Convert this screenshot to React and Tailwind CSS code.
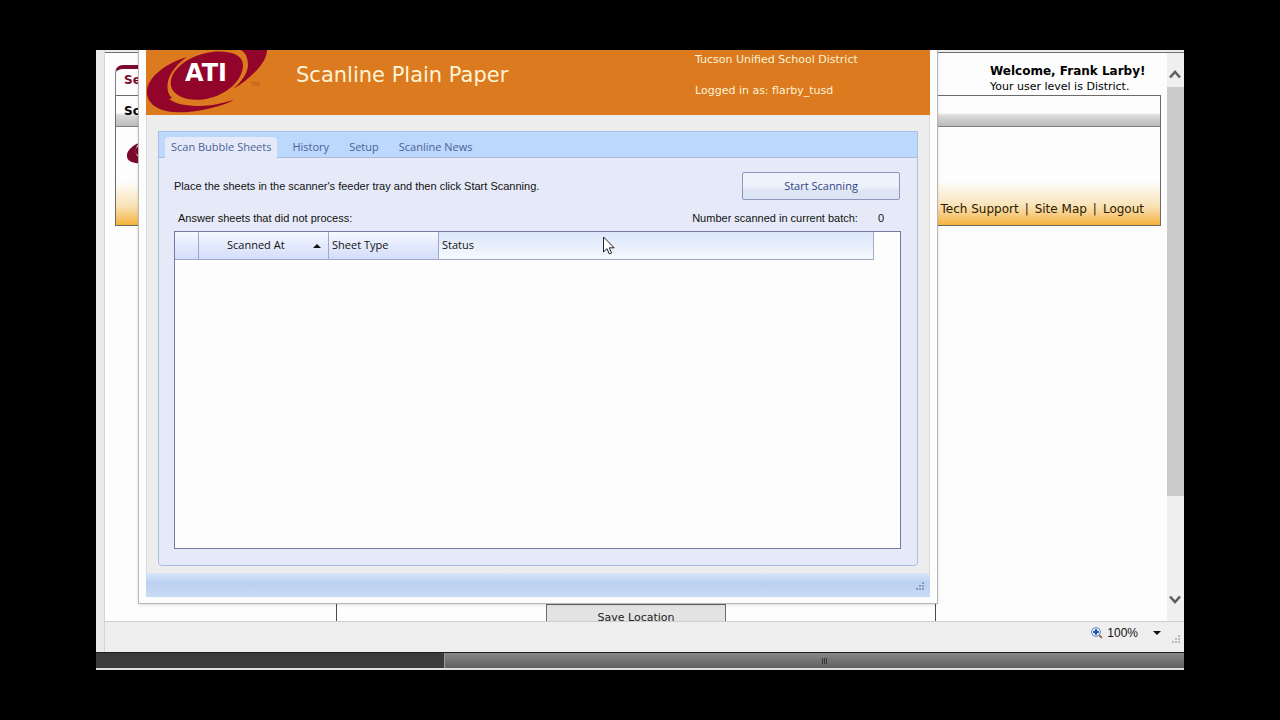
import { useState } from 'react'

const tabs = ['Scan Bubble Sheets', 'History', 'Setup', 'Scanline News']

function AtiLogo() {
  return (
    <svg viewBox="0 0 122 65" className="h-[65px] w-[122px] shrink-0" role="img" aria-label="ATI">
      <g fill="#92042a">
        <path d="M41 7C20 13 0 28 1 43C2 58 20 64 42 62C60 60 76 56 88 50C76 53 65 56 54 56C40 56 30 54 23 49L26 48C19 42 20 28 29 18C32 14 36 10 41 7Z" />
        <path d="M95 0H121C121 6 117 14 110 21C103 28 96 34 87 39C96 31 101 24 102 16C102 8 100 3 95 0Z" />
        <path d="M25 36C22 21 42 5 66 2C84 0 97 5 97 15C97 30 81 45 60 49C43 52 28 47 25 36Z" />
      </g>
      <text x="60" y="31" textAnchor="middle" fill="#fff" fontFamily="DejaVu Sans, sans-serif" fontSize="24" fontWeight="700">ATI</text>
      <text x="105" y="36" fill="#a9561b" fontFamily="Liberation Sans, sans-serif" fontSize="6">TM</text>
    </svg>
  )
}

function Grip({ className }) {
  return (
    <svg viewBox="0 0 10 10" className={`size-[10px] ${className}`} fill="currentColor" aria-hidden="true">
      <path d="M7 1h2v2H7zM4 4h2v2H4zM7 4h2v2H7zM1 7h2v2H1zM4 7h2v2H4zM7 7h2v2H7z" />
    </svg>
  )
}

function Chevron({ up }) {
  return (
    <svg viewBox="0 0 12 9" className="h-[9px] w-3" aria-hidden="true">
      <path d={up ? 'M1 7.5L6 2L11 7.5' : 'M1 1.5L6 7L11 1.5'} fill="none" stroke="#606060" strokeWidth="2.6" />
    </svg>
  )
}

function PortalPage() {
  return (
    <div className="relative min-w-0 flex-1 overflow-hidden bg-[#fdfdfd] pr-[6px] pl-[10px] font-['DejaVu_Sans',sans-serif]">
      <div className="flex h-[42px] items-end justify-between">
        <div className="flex h-[30px] w-24 items-center rounded-tl-lg border border-t-4 border-b-0 border-[#808080] border-t-[#7c0a2c] pb-1 pl-2 text-xs font-bold text-[#7c0a2c]">Se</div>
        <div className="w-[171px] text-black">
          <p className="text-xs leading-4 font-bold whitespace-nowrap">Welcome, Frank Larby!</p>
          <p className="text-[11px] leading-4 whitespace-nowrap">Your user level is District.</p>
        </div>
      </div>
      <div className="border border-[#6b6b6b]">
        <div className="flex h-[31px] items-center border-b border-[#808080] bg-linear-to-b from-[#fdfdfd] from-55% via-[#dadada] via-65% to-[#bcbcbc] pl-2 text-xs font-bold text-black">Sc</div>
        <div className="flex h-[98px] flex-col justify-between bg-linear-to-b from-[#fdfdfd] from-55% via-[#f9e3b8] via-80% to-[#f5b233]">
          <svg viewBox="0 0 28 24" className="mt-4 ml-[11px] h-6 w-7" aria-hidden="true">
            <path d="M12 0C-4 6-5 22 14 20C22 19 25 17 28 14C10 19 4 10 12 0Z" fill="#7c0a2c" />
            <ellipse cx="17" cy="8" rx="9" ry="6" fill="#7c0a2c" />
          </svg>
          <nav className="flex justify-end gap-[6px] pr-4 pb-2 text-xs leading-4 text-[#2a1a05]">
            <a href="#support">Tech Support</a>
            <span>|</span>
            <a href="#map">Site Map</a>
            <span>|</span>
            <a href="#logout">Logout</a>
          </nav>
        </div>
      </div>
      <div className="mt-[370px] mr-[225px] ml-[221px] flex h-10 justify-center border-x border-[#4a4a4a] pt-2">
        <button className="h-7 w-[180px] border border-[#6b6b6b] bg-[#e3e3e3] text-[11px] text-[#222]">Save Location</button>
      </div>
    </div>
  )
}

function Scrollbar() {
  return (
    <div className="flex w-[17px] flex-col bg-[#efefef]">
      <button aria-label="Scroll up" className="flex h-[34px] items-center justify-center pt-2 pr-[2px]"><Chevron up /></button>
      <div className="h-[409px] bg-[#cbcbcb]" />
      <button aria-label="Scroll down" className="mt-auto flex h-11 items-center justify-center pr-[2px]"><Chevron /></button>
    </div>
  )
}

function SheetTable() {
  const head = 'border-r border-b border-[#a0a8c8] px-[3px] text-left font-normal'
  return (
    <div className="h-[318px] border border-[#7479a3] bg-[#fdfdfd] pr-[26px]">
      <table className="w-full table-fixed border-separate border-spacing-0 font-['Open_Sans',sans-serif] text-[11px] text-[#111]">
        <thead>
          <tr className="h-7 bg-linear-to-b from-[#f4f8ff] to-[#d3dcfa]">
            <th className={`${head} w-6`} aria-label="Row" />
            <th className={`${head} w-[130px]`} aria-sort="ascending">
              <span className="flex items-center justify-between pr-1 pl-[25px]">
                Scanned At
                <svg viewBox="0 0 8 4" className="h-1 w-2" aria-hidden="true"><path d="M0 4L4 0L8 4Z" fill="#111" /></svg>
              </span>
            </th>
            <th className={`${head} w-[110px]`}>Sheet Type</th>
            <th className={`${head} bg-linear-to-b from-[#dbe6f9] to-[#f6f9ff]`}>Status</th>
          </tr>
        </thead>
        <tbody />
      </table>
    </div>
  )
}

function ScanlineWindow() {
  const [active, setActive] = useState(tabs[0])

  return (
    <section className="absolute top-0 right-[246px] left-[42px] border border-t-0 border-[#b9b9b9] bg-[#fcfcfc] px-[7px] pb-[6px] shadow-sm">
      <header className="flex h-[65px] bg-[#db7a1e] font-['DejaVu_Sans',sans-serif] text-[#fdf3d8]">
        <AtiLogo />
        <h1 className="flex-1 pt-[11px] pl-7 text-[21px] leading-7 whitespace-nowrap">Scanline Plain Paper</h1>
        <div className="flex w-[235px] flex-col gap-[15px] pt-[2px] text-[11px] leading-4">
          <p>Tucson Unified School District</p>
          <p>Logged in as: flarby_tusd</p>
        </div>
      </header>
      <main className="border-x border-[#dcdcdc] bg-[#ededed] px-[11px] pt-4 pb-[7px]">
        <div className="rounded-b-sm border border-[#a9bde6] bg-[#e6eaf8]">
          <div role="tablist" className="flex h-[26px] items-end border-b border-[#a9bde0] bg-[#bcd8fc] pl-[6px] font-['Open_Sans',sans-serif] text-[11px] text-[#4a6299]">
            {tabs.map((tab) => (
              <button
                key={tab}
                role="tab"
                aria-selected={active === tab}
                onClick={() => setActive(tab)}
                className={`h-5 px-[6px] whitespace-nowrap ${active === tab ? 'mr-[9px] -mb-px h-[21px] rounded-t-sm bg-[#e6eaf8]' : 'mr-2'}`}
              >
                {tab}
              </button>
            ))}
          </div>
          <div className="pt-[14px] pr-4 pb-4 pl-[15px] font-['Liberation_Sans',Arial,sans-serif] text-[11px] text-[#111]">
            <div className="flex h-7 items-center justify-between pr-px">
              <p>Place the sheets in the scanner's feeder tray and then click Start Scanning.</p>
              <button className="h-7 w-[158px] rounded-xs border border-[#8d97bd] bg-linear-to-b from-[#eef2fb] from-50% to-[#dde4f2] to-70% font-['Open_Sans',sans-serif] text-[#2d4586]">Start Scanning</button>
            </div>
            <div className="flex h-[31px] items-center justify-between pt-[5px] pr-[17px] pl-1">
              <p>Answer sheets that did not process:</p>
              <p className="flex gap-5">Number scanned in current batch: <output>0</output></p>
            </div>
            <SheetTable />
          </div>
        </div>
      </main>
      <footer className="flex h-6 items-center justify-end bg-linear-to-b from-[#d9e6fb] via-[#bcd0f0] via-40% to-[#c9dcf5] pt-[2px] pr-[5px]">
        <Grip className="text-[#7f9ac4]" />
      </footer>
    </section>
  )
}

export default function App() {
  return (
    <div className="flex h-screen flex-col bg-black px-24 py-[50px]">
      <div className="relative flex min-h-0 flex-1 flex-col overflow-hidden bg-[#eaeaea]">
        <div className="ml-2 flex min-h-0 flex-1 flex-col border-l border-[#d5d5d5] pt-[2px]">
          <div className="flex min-h-0 flex-1 border-t border-[#707070]">
            <PortalPage />
            <Scrollbar />
          </div>
          <div className="flex h-[31px] shrink-0 items-center justify-end border-t border-[#cfcfcf] bg-[#eeeeee] pr-[3px] pb-2">
            <button className="flex items-center gap-1 font-['Liberation_Sans',Arial,sans-serif] text-xs text-[#111]">
              <svg viewBox="0 0 12 12" className="size-3" aria-hidden="true">
                <path d="M8 8L11 11" stroke="#a5714d" strokeWidth="2" />
                <circle cx="5" cy="5" r="4.4" fill="#d9ecff" stroke="#5b83bf" />
                <path d="M5 2.2V7.8M2.2 5H7.8" stroke="#1c4fa5" strokeWidth="2" />
              </svg>
              100%
              <svg viewBox="0 0 8 4" className="ml-[11px] h-1 w-2" aria-hidden="true"><path d="M0 0H8L4 4Z" fill="#111" /></svg>
            </button>
            <Grip className="mt-3 ml-[10px] text-[#bdbdbd]" />
          </div>
        </div>
        <div className="flex h-[18px] shrink-0 border-t border-b-2 border-t-[#1c1c1c] border-b-[#dedede] bg-[#3b3b3b]">
          <div className="ml-[348px] flex flex-1 items-center justify-center border-l border-[#999] bg-linear-to-b from-[#888] to-[#606060] pl-5">
            <div className="flex gap-px">
              <span className="h-[6px] w-px bg-[#333]" />
              <span className="h-[6px] w-px bg-[#333]" />
              <span className="h-[6px] w-px bg-[#333]" />
            </div>
          </div>
        </div>
        <ScanlineWindow />
        <svg viewBox="0 0 12 19" className="absolute top-[186px] left-[507px] h-[19px] w-3" aria-hidden="true">
          <path d="M.5 1V16L4 12.7L6.3 18L8.6 17L6.3 11.8H11.2Z" fill="#fff" stroke="#222" />
        </svg>
      </div>
    </div>
  )
}
